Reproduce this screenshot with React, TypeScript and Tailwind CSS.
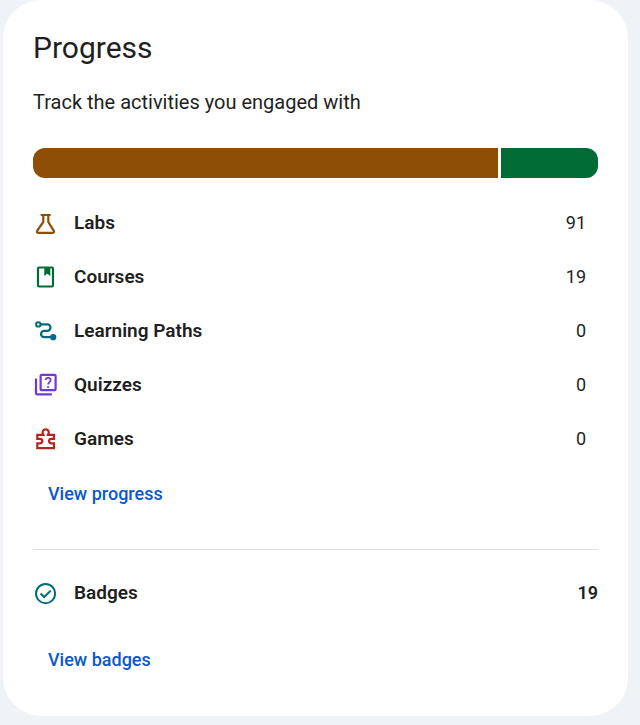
import type { ReactNode } from "react";

type Activity = {
	label: string;
	count: number;
	icon: ReactNode;
	bar: string;
};

function Icon({ color, children }: { color: string; children: ReactNode }) {
	return (
		<svg
			viewBox="0 0 25 25"
			className={`size-[25px] shrink-0 ${color}`}
			fill="none"
			stroke="currentColor"
			strokeWidth={2}
			aria-hidden="true"
		>
			{children}
		</svg>
	);
}

const activities: Activity[] = [
	{
		label: "Labs",
		count: 91,
		bar: "bg-[#8f4e06]",
		icon: (
			<Icon color="text-[#8f4e06]">
				<path d="M7.7 4H17.7M10.3 4V11L4.3 19.6Q3.2 21.8 5.4 21.8H19.6Q21.8 21.8 20.7 19.6L15.3 11V4" strokeWidth={2.2} />
			</Icon>
		),
	},
	{
		label: "Courses",
		count: 19,
		bar: "bg-[#006c35]",
		icon: (
			<Icon color="text-[#006c35]">
				<rect x="5" y="2.5" width="15" height="19" rx="1" strokeWidth={2.2} />
				<path d="M11.3 3H17.3V11L14.3 8.7L11.3 11Z" fill="currentColor" stroke="none" />
			</Icon>
		),
	},
	{
		label: "Learning Paths",
		count: 0,
		bar: "bg-[#006a83]",
		icon: (
			<Icon color="text-[#006a83]">
				<circle cx="5.3" cy="5.4" r="2.2" />
				<path d="M7.5 5.4H14.3A3.2 3.2 0 0 1 14.3 11.8H11.2A3.2 3.2 0 0 0 11.2 18.2H20" strokeWidth={2.2} />
				<circle cx="20.2" cy="18.2" r="3.1" fill="currentColor" stroke="none" />
			</Icon>
		),
	},
	{
		label: "Quizzes",
		count: 0,
		bar: "bg-[#7438d2]",
		icon: (
			<Icon color="text-[#7438d2]">
				<rect x="7.6" y="1.8" width="15" height="15.4" rx="1" strokeWidth={2.2} />
				<path d="M3 5.6V20.2Q3 21.4 4.2 21.4H18.8" strokeWidth={2.2} />
				<path d="M12.6 7C12.8 4.2 17.6 4.2 17.6 7.2C17.6 9.2 15.1 9.2 15.1 11.6" strokeWidth={1.8} />
				<circle cx="15.1" cy="14" r="1.1" fill="currentColor" stroke="none" />
			</Icon>
		),
	},
	{
		label: "Games",
		count: 0,
		bar: "bg-[#b3261e]",
		icon: (
			<Icon color="text-[#b3261e]">
				<path d="M4.3 7.8H10.3C8.7 5 10 2.4 12.7 2.4S16.7 5 15.1 7.8H21V11.8H18.6C15.2 11.8 15.2 16.4 18.6 16.4H21V21.2H4.3V16.4H6.8C10.2 16.4 10.2 11.8 6.8 11.8H4.3Z" strokeWidth={2.2} />
			</Icon>
		),
	},
];

export default function App() {
	return (
		<div className="min-h-screen bg-[#eff3f8] pr-3 pb-[9px] pl-[3px] font-['Roboto',sans-serif] text-[#1f1f1f]">
			<main className="rounded-[38px] bg-white px-[30px] pt-7 pb-[42px]">
				<h1 className="text-[30px] leading-10">Progress</h1>
				<p className="mt-5 text-xl leading-7">Track the activities you engaged with</p>

				<div className="mt-8 flex h-[30px] gap-[3px] overflow-hidden rounded-xl">
					{activities.filter((a) => a.count > 0).map((a) => (
						<div key={a.label} className={`basis-0 ${a.bar}`} style={{ flexGrow: a.count }} />
					))}
				</div>

				<ul className="mt-[18px]">
					{activities.map((a) => (
						<li key={a.label} className="flex h-[54px] items-center pr-3 text-lg">
							{a.icon}
							<span className="ml-4 text-[19px] font-semibold">{a.label}</span>
							<span className="ml-auto">{a.count}</span>
						</li>
					))}
				</ul>

				<a href="#progress" className="ml-[15px] inline-block py-3.5 text-lg font-medium text-[#0b57d0]">View progress</a>

				<section className="mt-[27px] border-t border-[#dcdcdc] pt-[29px]">
					<div className="flex h-7 items-center text-lg font-semibold">
						<Icon color="text-[#006a83]">
							<circle cx="12.6" cy="12.6" r="9.6" />
							<path d="M7.6 12.6L11.2 16L17.7 9.6" />
						</Icon>
						<span className="ml-4 text-[19px]">Badges</span>
						<span className="ml-auto">19</span>
					</div>
					<a href="#badges" className="mt-[39px] ml-[15px] inline-block text-lg font-medium text-[#0b57d0]">View badges</a>
				</section>
			</main>
		</div>
	);
}
